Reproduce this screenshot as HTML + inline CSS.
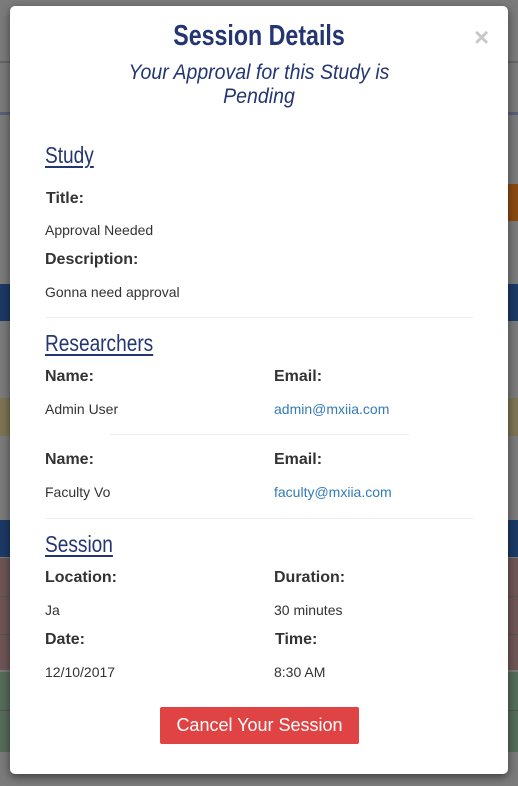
<!DOCTYPE html>
<html><head><style>
body{margin:0;width:518px;height:786px;background:#7b7b7b;position:relative;overflow:hidden;font-family:"Liberation Sans",sans-serif}
.b{position:absolute;left:0;width:518px}
.m{position:absolute;left:10px;top:6px;width:498px;height:768px;background:#fff;border-radius:5px;box-shadow:0 3px 9px rgba(0,0,0,.5)}
.t{position:absolute;white-space:nowrap}
.h{font-family:"Liberation Sans",sans-serif;color:#243672}
.sec{font-family:"Liberation Sans",sans-serif;color:#243672;font-size:23px;text-decoration:underline;text-decoration-thickness:2px;text-underline-offset:3px;transform:scaleX(.83);transform-origin:left center}
.l{font-weight:bold;font-size:16px;color:#333}
.v{font-size:14px;color:#333}
.a{font-size:14px;color:#337ab7}
.hr{position:absolute;height:1px;background:#eee}
</style></head><body>
<div class="b" style="top:61px;height:2px;background:#666"></div>
<div class="b" style="top:112px;height:3px;background:#5a5f78"></div>
<div style="position:absolute;left:500px;top:184px;width:18px;height:37px;background:#8a4a12"></div>
<div class="b" style="top:284px;height:37px;background:#1b3a66"></div>
<div class="b" style="top:398px;height:38px;background:#7d7453"></div>
<div class="b" style="top:520px;height:37px;background:#1b3a66"></div>
<div class="b" style="top:558px;height:112px;background:#6e5656"></div>
<div class="b" style="top:596px;height:1px;background:#555"></div>
<div class="b" style="top:634px;height:1px;background:#555"></div>
<div class="b" style="top:672px;height:80px;background:#566c5a"></div>
<div class="b" style="top:710px;height:1px;background:#555"></div>
<div class="m">
<div class="t h" style="left:0;width:498px;text-align:center;top:14px;font-size:29px;font-weight:bold;transform:scaleX(.8)">Session Details</div>
<div class="t" style="left:464px;top:16px;font-size:26px;font-weight:bold;color:#c8c8c8">×</div>
<div class="t h" style="left:0;width:498px;text-align:center;top:55px;font-size:21px;font-style:italic;line-height:24px;transform:scaleX(.93)">Your Approval for this Study is<br>Pending</div>
<div class="t sec" style="left:35px;top:136px">Study</div>
<div class="t l" style="left:36px;top:184px">Title:</div>
<div class="t v" style="left:35px;top:216px">Approval Needed</div>
<div class="t l" style="left:35px;top:245px">Description:</div>
<div class="t v" style="left:35px;top:278px">Gonna need approval</div>
<div class="hr" style="left:35px;top:311px;width:428px"></div>
<div class="t sec" style="left:35px;top:324px">Researchers</div>
<div class="t l" style="left:35px;top:362px">Name:</div>
<div class="t l" style="left:264px;top:362px">Email:</div>
<div class="t v" style="left:35px;top:395px">Admin User</div>
<div class="t a" style="left:264px;top:395px">admin@mxiia.com</div>
<div class="hr" style="left:99px;top:428px;width:300px"></div>
<div class="t l" style="left:35px;top:445px">Name:</div>
<div class="t l" style="left:264px;top:445px">Email:</div>
<div class="t v" style="left:35px;top:478px">Faculty Vo</div>
<div class="t a" style="left:264px;top:478px">faculty@mxiia.com</div>
<div class="hr" style="left:35px;top:512px;width:428px"></div>
<div class="t sec" style="left:35px;top:525px">Session</div>
<div class="t l" style="left:35px;top:563px">Location:</div>
<div class="t l" style="left:264px;top:563px">Duration:</div>
<div class="t v" style="left:35px;top:596px">Ja</div>
<div class="t v" style="left:264px;top:596px">30 minutes</div>
<div class="t l" style="left:35px;top:625px">Date:</div>
<div class="t l" style="left:265px;top:625px">Time:</div>
<div class="t v" style="left:35px;top:658px">12/10/2017</div>
<div class="t v" style="left:264px;top:658px">8:30 AM</div>
<div style="position:absolute;left:150px;top:701px;width:199px;height:37px;background:#df4343;border-radius:2px;color:#fff;font-size:18px;text-align:center;line-height:37px">Cancel Your Session</div>
</div>
</body></html>
